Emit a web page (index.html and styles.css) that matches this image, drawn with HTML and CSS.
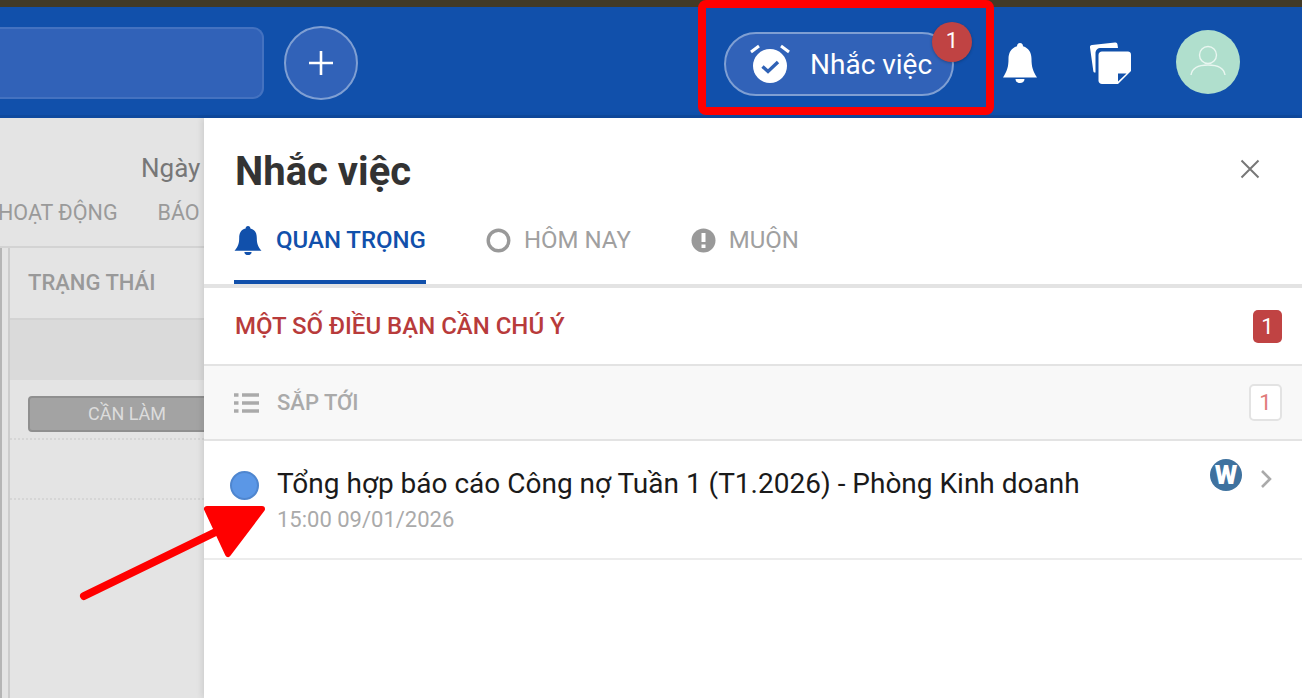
FILE: index.html
```html
<!DOCTYPE html>
<html lang="vi">
<head>
  <meta charset="UTF-8" />
  <meta name="viewport" content="width=device-width, initial-scale=1.0"/>
  <title>Nhắc việc</title>
  <link rel="stylesheet" href="styles.css">
</head>
<body>
  <div class="top-strip"></div>

  <header class="topbar">
    <div class="search-box"></div>
    <button class="add-btn" type="button">
      <svg width="26" height="26" viewBox="0 0 26 26"><path d="M13 1v24M1 13h24" stroke="#fff" stroke-width="2.6" fill="none"/></svg>
    </button>

    <div class="topbar-right">
      <div class="remind-btn">
        <svg class="remind-icon" width="40" height="40" viewBox="0 0 40 40">
          <circle cx="20" cy="22" r="17" fill="#fff"/>
          <path d="M1 8l8-6M39 8l-8-6" stroke="#fff" stroke-width="3" fill="none"/>
          <path d="M12.500 22.500l5.500 5 10-9.500" stroke="#2f62b6" stroke-width="3.400" fill="none"/>
        </svg>
        <span>Nhắc việc</span>
        <span class="remind-badge">1</span>
      </div>
      <svg class="bell-icon" width="34" height="40" viewBox="0 0 34 40">
        <path d="M17 0c2 0 3 1.500 3 3.200C26 5 28.500 10 28.500 16c0 8 1.500 12 5.500 18.500H0C4 28 5.500 24 5.500 16 5.500 10 8 5 14 3.200 14 1.500 15 0 17 0z" fill="#fff"/>
        <path d="M12.500 36h9c0 2.500-2 4-4.500 4s-4.500-1.500-4.500-4z" fill="#fff"/>
      </svg>
      <svg class="note-icon" width="42" height="42" viewBox="0 0 42 42">
        <path d="M1 5.500C.8 4 1.500 3.300 3 3L26 .5c1.500-.2 2.300.5 2.500 2L29 6H12c-3.500 0-5.500 2-5.500 5.500V30.500H6C5 30.500 4.500 30 4.300 29z" fill="#fff"/>
        <path d="M13 9.500h26c1.500 0 3 1.200 3 3V29L29 42H13c-2 0-3.500-1.500-3.500-3.500V13c0-2 1.500-3.500 3.500-3.500z" fill="#fff"/>
        <path d="M29 39.500V31.500h8.500z" fill="#1150ab"/>
      </svg>
      <div class="avatar">
        <svg width="36" height="36" viewBox="0 0 36 36">
          <circle cx="18" cy="11" r="8.500" stroke="#e9f6f0" stroke-width="1.400" fill="none"/>
          <path d="M1 31c1-7 8-10 17-10s16 3 17 10" stroke="#e9f6f0" stroke-width="1.400" fill="none"/>
        </svg>
      </div>
    </div>
  </header>

  <main class="content">
    <section class="board">
      <div class="board-date">Ngày</div>
      <nav class="board-tabs">
        <span>HOẠT ĐỘNG</span>
        <span>BÁO</span>
      </nav>
      <div class="board-table">
        <div class="board-inner">
          <div class="board-head">TRẠNG THÁI</div>
          <div class="board-band"></div>
          <div class="board-row"><span class="status-tag">CẦN LÀM</span></div>
          <div class="board-row"></div>
        </div>
      </div>
    </section>

    <aside class="panel">
      <div class="panel-head">
        <h1>Nhắc việc</h1>
        <svg class="close-icon" width="20" height="20" viewBox="0 0 20 20"><path d="M1.500 1.500l17 17M18.500 1.500l-17 17" stroke="#777" stroke-width="2" fill="none"/></svg>
      </div>

      <div class="tabs">
        <div class="tab active">
          <svg width="28" height="29" viewBox="0 0 26 28">
            <path d="M13 0c1.500 0 2.300 1 2.300 2.300C20 3.500 21.500 7 21.500 11.500c0 5.500 1 8 4.500 12.500H0c3.500-4.500 4.500-7 4.500-12.500C4.500 7 6 3.500 10.700 2.300 10.700 1 11.500 0 13 0z" fill="#1150ab"/>
            <path d="M9.500 25h7c0 1.800-1.500 3-3.500 3s-3.500-1.200-3.500-3z" fill="#1150ab"/>
          </svg>
          <span>QUAN TRỌNG</span>
        </div>
        <div class="tab">
          <svg width="25" height="25" viewBox="0 0 25 25"><circle cx="12.500" cy="12.500" r="10.300" stroke="#999" stroke-width="3.400" fill="none"/></svg>
          <span>HÔM NAY</span>
        </div>
        <div class="tab">
          <svg width="25" height="25" viewBox="0 0 25 25">
            <circle cx="12.500" cy="12.500" r="12" fill="#999"/>
            <path d="M12.500 5v9" stroke="#fff" stroke-width="4" fill="none"/>
            <path d="M12.500 16.500v3.500" stroke="#fff" stroke-width="4" fill="none"/>
          </svg>
          <span>MUỘN</span>
        </div>
      </div>

      <div class="section-alert">
        <span>MỘT SỐ ĐIỀU BẠN CẦN CHÚ Ý</span>
        <span class="count-solid">1</span>
      </div>

      <div class="section-upcoming">
        <svg width="25" height="20" viewBox="0 0 25 20">
          <path d="M0 2h4.500M8 2h17M0 10h4.500M8 10h17M0 18h4.500M8 18h17" stroke="#aaa" stroke-width="3.600" fill="none"/>
        </svg>
        <span class="upcoming-label">SẮP TỚI</span>
        <span class="count-outline">1</span>
      </div>

      <div class="task">
        <span class="task-dot"></span>
        <div class="task-text">
          <div class="task-title">Tổng hợp báo cáo Công nợ Tuần 1 (T1.2026) - Phòng Kinh doanh</div>
          <div class="task-time">15:00 09/01/2026</div>
        </div>
        <span class="task-source">W</span>
        <svg class="task-arrow" width="12" height="20" viewBox="0 0 12 20"><path d="M2 2l8 8-8 8" stroke="#aaa" stroke-width="2.600" fill="none"/></svg>
      </div>
    </aside>
  </main>

  <!-- annotation drawn over the screenshot -->
  <div class="mark-box"></div>
  <svg class="mark-arrow" width="1302" height="698" viewBox="0 0 1302 698">
    <path d="M84 596L226 527" stroke="#f00" stroke-width="8" stroke-linecap="round" fill="none"/>
    <path d="M207 509H262L228 554z" fill="#f00" stroke="#f00" stroke-width="6" stroke-linejoin="round"/>
  </svg>
</body>
</html>
```

FILE: styles.css
```css
* {
  box-sizing: border-box;
}

body {
  font-family: Roboto, 'Liberation Sans', sans-serif;
  background-color: #fff;
  margin: 0;
  padding: 0;
  display: flex;
  flex-direction: column;
  height: 698px;
  overflow: hidden;
}

.top-strip {
  height: 7px;
  background-color: #423a26;
}

/* header */
.topbar {
  display: flex;
  align-items: center;
  height: 111px;
  background-color: #1150ab;
  border-bottom: 3px solid #0f4a9f;
  padding: 4px 62px 0 0;
}

.search-box {
  width: 264px;
  height: 72px;
  background-color: #3162b8;
  border: 2px solid #4472c0;
  border-left: none;
  border-radius: 0 11px 11px 0;
}

.add-btn {
  display: flex;
  align-items: center;
  justify-content: center;
  width: 74px;
  height: 74px;
  margin-left: 20px;
  padding: 0;
  background-color: #3162b8;
  border: 2px solid #7f9fd3;
  border-radius: 50%;
}

.topbar-right {
  display: flex;
  align-items: center;
  margin-left: auto;
}

.remind-btn {
  position: relative;
  display: flex;
  align-items: center;
  width: 230px;
  height: 64px;
  margin-top: 2px;
  padding-left: 24px;
  background-color: #3162b8;
  border: 2px solid #7f9fd3;
  border-radius: 32px;
  color: #fff;
  font-size: 28px;
}

.remind-icon {
  margin-right: 20px;
}

.remind-badge {
  position: absolute;
  top: -12px;
  right: -20px;
  width: 40px;
  height: 40px;
  line-height: 38px;
  text-align: center;
  font-size: 22px;
  border-radius: 50%;
  background-color: #c04343;
  box-shadow: 0 1px 3px rgba(0,0,0,0.25);
}

.bell-icon {
  margin-left: 49px;
}

.note-icon {
  margin-left: 52px;
}

.avatar {
  display: flex;
  align-items: center;
  justify-content: center;
  width: 64px;
  height: 64px;
  margin-left: 45px;
  margin-bottom: 2px;
  border-radius: 50%;
  background-color: #b0dfcd;
}

/* page body */
.content {
  display: flex;
  flex: 1;
  min-height: 0;
}

.board {
  display: flex;
  flex-direction: column;
  width: 204px;
  flex-shrink: 0;
  overflow: hidden;
  background-color: #e4e4e4;
  color: #999;
}

.board-date {
  padding: 34px 0 0 141px;
  font-size: 26px;
  line-height: 32px;
  color: #777;
  white-space: nowrap;
}

.board-tabs {
  display: flex;
  gap: 40px;
  height: 64px;
  margin-left: -2px;
  padding-top: 14px;
  font-size: 21.500px;
  line-height: 30px;
  white-space: nowrap;
  color: #9a9a9a;
  border-bottom: 2px solid #d3d3d3;
}

.board-table {
  flex: 1;
  border-left: 2px solid #b5b5b5;
  padding-left: 6px;
}

.board-inner {
  height: 100%;
  border-left: 2px solid #ccc;
}

.board-head {
  height: 72px;
  padding-left: 18px;
  line-height: 70px;
  font-size: 22px;
  font-weight: 500;
  white-space: nowrap;
  border-bottom: 2px solid #d3d3d3;
}

.board-band {
  height: 60px;
  background-color: #dadada;
}

.board-row {
  height: 60px;
  padding: 16px 0 0 18px;
  border-bottom: 2px dotted #d6d6d6;
  overflow: hidden;
}

.status-tag {
  display: block;
  width: 198px;
  height: 36px;
  line-height: 32px;
  text-align: center;
  font-size: 18px;
  color: #dcdcdc;
  background-color: #a3a3a3;
  border: 2px solid #8f8f8f;
  border-radius: 4px;
}

/* reminder panel */
.panel {
  flex: 1;
  min-width: 0;
  background-color: #fff;
  box-shadow: -2px 0 6px rgba(0,0,0,0.1);
  position: relative;
}

.panel-head {
  display: flex;
  align-items: center;
  justify-content: space-between;
  height: 100px;
  padding: 6px 42px 0 31px;
}

.close-icon {
  margin-top: -4px;
}

.panel-head h1 {
  margin: 0;
  font-size: 40px;
  font-weight: 700;
  color: #333;
}

.tabs {
  display: flex;
  gap: 60px;
  height: 70px;
  padding-left: 30px;
  border-bottom: 4px solid #e3e3e3;
}

.tab {
  display: flex;
  align-items: center;
  gap: 13px;
  height: 66px;
  padding-bottom: 22px;
  font-size: 24px;
  color: #a0a0a0;
  white-space: nowrap;
}

.tab.active {
  gap: 14px;
  color: #1150ab;
  font-weight: 500;
  border-bottom: 4px solid #1150ab;
  padding-bottom: 18px;
}

.section-alert {
  display: flex;
  align-items: center;
  justify-content: space-between;
  height: 78px;
  padding: 0 20px 0 31px;
  font-size: 24px;
  font-weight: 500;
  color: #b83b3b;
  border-bottom: 2px solid #e3e3e3;
}

.count-solid {
  width: 29px;
  height: 33px;
  line-height: 33px;
  text-align: center;
  color: #fff;
  font-size: 22px;
  font-weight: 400;
  background-color: #c04343;
  border-radius: 5px;
}

.section-upcoming {
  display: flex;
  align-items: center;
  height: 75px;
  padding: 0 20px 0 30px;
  background-color: #f8f8f8;
  border-bottom: 2px solid #e3e3e3;
}

.upcoming-label {
  margin-left: 18px;
  font-size: 22px;
  font-weight: 500;
  color: #aaa;
}

.count-outline {
  width: 33px;
  height: 37px;
  margin-left: auto;
  line-height: 33px;
  text-align: center;
  font-size: 22px;
  color: #e07a7a;
  background-color: #fff;
  border: 2px solid #e3e3e3;
  border-radius: 5px;
}

.task {
  display: flex;
  align-items: flex-start;
  height: 119px;
  padding: 26px 30px 0 26px;
  border-bottom: 2px solid #ececec;
}

.task-dot {
  width: 29px;
  height: 29px;
  margin-top: 4px;
  border-radius: 50%;
  background-color: #5b97e6;
  border: 2px solid #4f86cf;
  flex-shrink: 0;
}

.task-text {
  flex: 1;
  margin-left: 18px;
}

.task-title {
  font-size: 28px;
  line-height: 34px;
  color: #1a1a1a;
  white-space: nowrap;
}

.task-time {
  margin-top: 4px;
  font-size: 22px;
  line-height: 30px;
  color: #aaa;
}

.task-source {
  width: 32px;
  height: 32px;
  margin-top: -8px;
  border-radius: 50%;
  background-color: #3f729f;
  color: #fff;
  font-size: 26px;
  font-weight: 900;
  line-height: 32px;
  text-align: center;
  overflow: hidden;
}

.task-arrow {
  margin-left: 18px;
  margin-top: 2px;
}

/* annotation */
.mark-box {
  position: absolute;
  left: 698px;
  top: 0;
  width: 296px;
  height: 115px;
  border: 8px solid #f00;
  border-radius: 8px;
}

.mark-arrow {
  position: absolute;
  left: 0;
  top: 0;
  pointer-events: none;
}
```
